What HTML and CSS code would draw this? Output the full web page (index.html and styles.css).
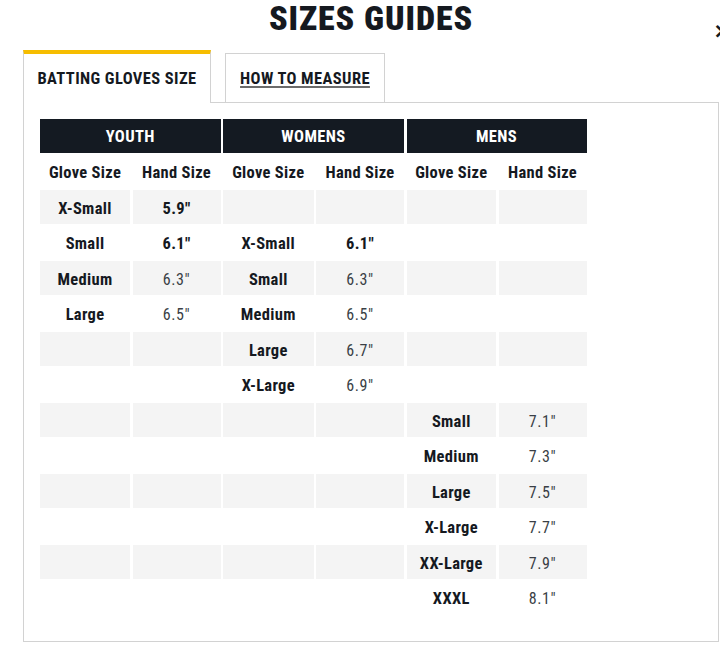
FILE: index.html
```html
<!DOCTYPE html>
<html>
<head>
<meta charset="utf-8">
<link rel="stylesheet" href="styles.css">
</head>
<body>
<div class="modal">
  <h1 class="title">SIZES GUIDES</h1>
  <button class="close" aria-label="Close">×</button>
  <div class="tabs">
    <div class="tab tab-active">BATTING GLOVES SIZE</div>
    <div class="tab tab-link"><span>HOW TO MEASURE</span></div>
  </div>
  <div class="panel">
    <div class="grid">
      <div class="group">YOUTH</div>
      <div class="group">WOMENS</div>
      <div class="group">MENS</div>

      <div class="row">
        <div class="cell b">Glove Size</div><div class="cell b">Hand Size</div>
        <div class="cell b">Glove Size</div><div class="cell b">Hand Size</div>
        <div class="cell b">Glove Size</div><div class="cell b">Hand Size</div>
      </div>

      <div class="row stripe">
        <div class="cell b">X-Small</div><div class="cell b">5.9"</div>
        <div class="cell"></div><div class="cell"></div>
        <div class="cell"></div><div class="cell"></div>
      </div>
      <div class="row">
        <div class="cell b">Small</div><div class="cell b">6.1"</div>
        <div class="cell b">X-Small</div><div class="cell b">6.1"</div>
        <div class="cell"></div><div class="cell"></div>
      </div>
      <div class="row stripe">
        <div class="cell b">Medium</div><div class="cell">6.3"</div>
        <div class="cell b">Small</div><div class="cell">6.3"</div>
        <div class="cell"></div><div class="cell"></div>
      </div>
      <div class="row">
        <div class="cell b">Large</div><div class="cell">6.5"</div>
        <div class="cell b">Medium</div><div class="cell">6.5"</div>
        <div class="cell"></div><div class="cell"></div>
      </div>
      <div class="row stripe">
        <div class="cell"></div><div class="cell"></div>
        <div class="cell b">Large</div><div class="cell">6.7"</div>
        <div class="cell"></div><div class="cell"></div>
      </div>
      <div class="row">
        <div class="cell"></div><div class="cell"></div>
        <div class="cell b">X-Large</div><div class="cell">6.9"</div>
        <div class="cell"></div><div class="cell"></div>
      </div>
      <div class="row stripe">
        <div class="cell"></div><div class="cell"></div>
        <div class="cell"></div><div class="cell"></div>
        <div class="cell b">Small</div><div class="cell">7.1"</div>
      </div>
      <div class="row">
        <div class="cell"></div><div class="cell"></div>
        <div class="cell"></div><div class="cell"></div>
        <div class="cell b">Medium</div><div class="cell">7.3"</div>
      </div>
      <div class="row stripe">
        <div class="cell"></div><div class="cell"></div>
        <div class="cell"></div><div class="cell"></div>
        <div class="cell b">Large</div><div class="cell">7.5"</div>
      </div>
      <div class="row">
        <div class="cell"></div><div class="cell"></div>
        <div class="cell"></div><div class="cell"></div>
        <div class="cell b">X-Large</div><div class="cell">7.7"</div>
      </div>
      <div class="row stripe">
        <div class="cell"></div><div class="cell"></div>
        <div class="cell"></div><div class="cell"></div>
        <div class="cell b">XX-Large</div><div class="cell">7.9"</div>
      </div>
      <div class="row">
        <div class="cell"></div><div class="cell"></div>
        <div class="cell"></div><div class="cell"></div>
        <div class="cell b">XXXL</div><div class="cell">8.1"</div>
      </div>
    </div>
  </div>
</div>
</body>
</html>
```
FILE: styles.css
```css
html, body {
  margin: 0;
  padding: 0;
  background: #fff;
}
body {
  font-family: Roboto, "Noto Sans", sans-serif;
  font-stretch: condensed;
  color: #15191f;
  overflow: hidden;
}
.modal {
  position: relative;
  width: 720px;
  height: 657px;
  padding-left: 23px;
  box-sizing: border-box;
}
.title {
  margin: 0;
  width: 696px;
  height: 50px;
  padding-top: 1px;
  box-sizing: border-box;
  text-align: center;
  font-size: 34px;
  line-height: 34px;
  font-weight: 900;
  letter-spacing: 0.9px;
  color: #15191f;
}
.close {
  position: absolute;
  left: 713px;
  top: 18px;
  margin: 0;
  padding: 0;
  border: 0;
  background: none;
  font-family: "DejaVu Sans", sans-serif;
  font-size: 22px;
  font-weight: 700;
  line-height: 26px;
  color: #15191f;
}
.tabs {
  display: flex;
  align-items: flex-end;
  gap: 14px;
  height: 52px;
  position: relative;
  z-index: 1;
}
.tab {
  box-sizing: border-box;
  display: flex;
  align-items: center;
  justify-content: center;
  font-weight: 700;
  font-size: 16.5px;
  letter-spacing: 0.4px;
  color: #15191f;
  background: #fff;
}
.tab-active {
  width: 188px;
  height: 53px;
  margin-bottom: -1px;
  border-top: 4px solid #f6bd00;
  border-left: 1px solid #d2d2d2;
  border-right: 1px solid #d2d2d2;
  padding-top: 0;
}
.tab-link {
  width: 160px;
  height: 49px;
  border: 1px solid #d2d2d2;
  border-bottom: 0;
  padding-top: 1px;
}
.tab-link span {
  text-decoration: underline;
  text-decoration-color: #6b6b6b;
  text-decoration-thickness: 2px;
  text-underline-offset: 2px;
}
.panel {
  width: 696px;
  height: 540px;
  box-sizing: border-box;
  border: 1px solid #d2d2d2;
  padding: 16px 16px 0 16px;
}
.grid {
  display: grid;
  grid-template-columns: 90px 88px 90.5px 88px 89.5px 88px;
  grid-auto-rows: 33.5px;
  column-gap: 2.5px;
  row-gap: 2px;
}
.group {
  grid-column: span 2;
  background: #141a22;
  color: #fff;
  font-weight: 700;
  font-size: 16.5px;
  letter-spacing: 0.4px;
  padding-top: 2px;
  display: flex;
  align-items: center;
  justify-content: center;
}
.row {
  display: contents;
}
.cell {
  display: flex;
  align-items: center;
  justify-content: center;
  padding-top: 3px;
  font-size: 16px;
  font-weight: 400;
  letter-spacing: 0.6px;
  color: #3a3f46;
}
.cell.b {
  font-size: 16.5px;
  font-weight: 700;
  letter-spacing: 0.3px;
  color: #15191f;
}
.stripe .cell {
  background: #f4f4f4;
}
```
